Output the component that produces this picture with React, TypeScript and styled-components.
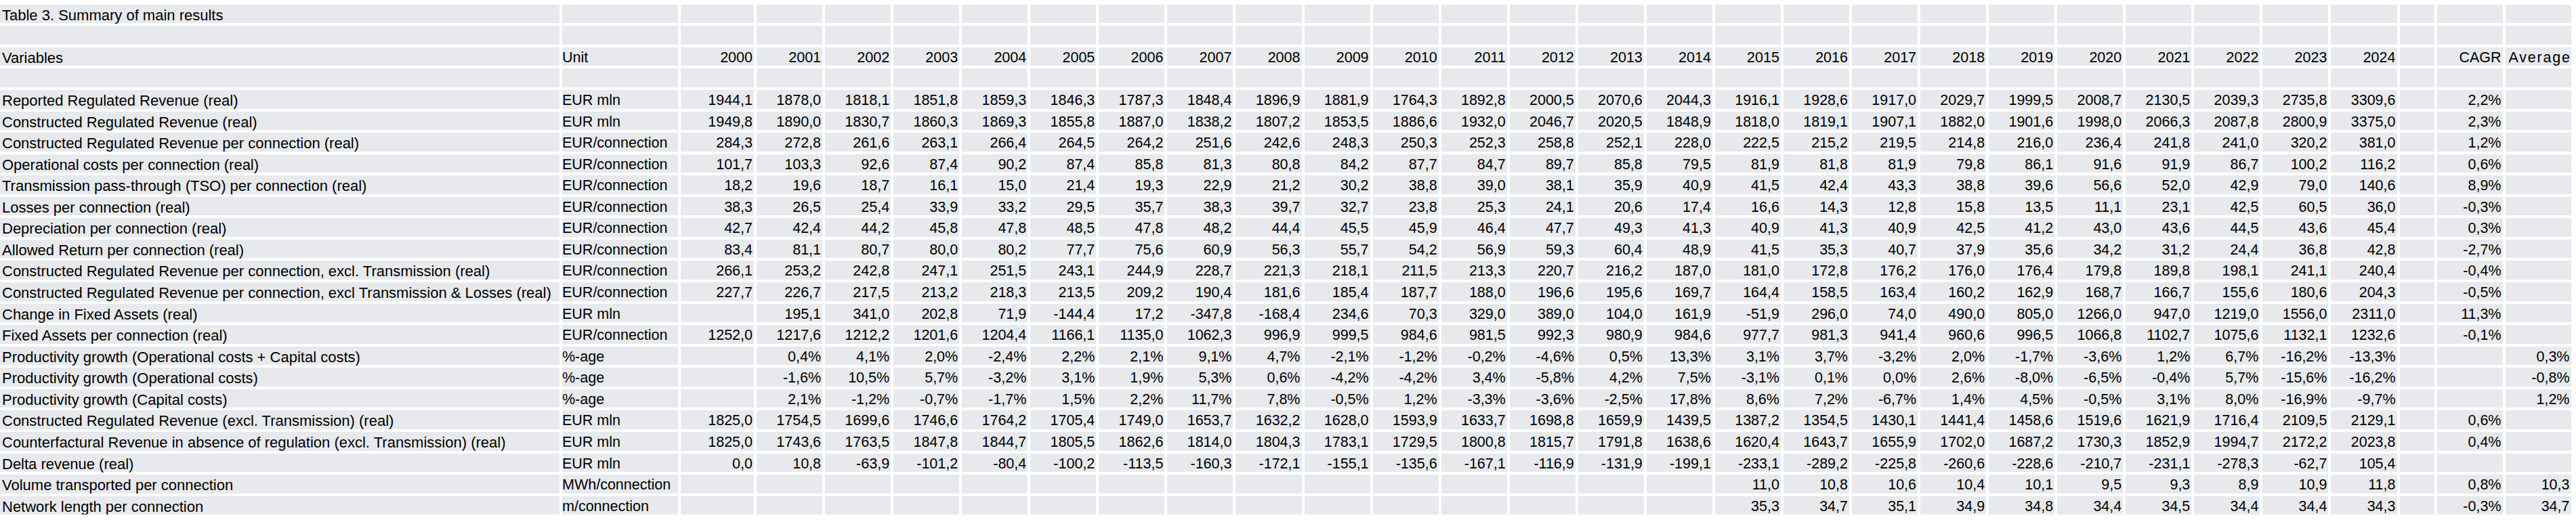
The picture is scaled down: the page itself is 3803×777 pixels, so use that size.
import React from "react";
import styled, { createGlobalStyle } from "styled-components";

const GlobalStyle = createGlobalStyle`
  html, body {
    margin: 0;
    padding: 0;
    background: #ffffff;
  }
  body {
    font-family: "Liberation Sans", Arial, sans-serif;
    color: #000000;
  }
`;

const COLUMNS = "826px 171px 108px repeat(24, 97.07px) 51px 97px 97px";

const Sheet = styled.div`
  display: flex;
  flex-direction: column;
  gap: 4px;
  padding-top: 6.7px;
  width: 3803px;
  overflow: hidden;
`;

const Row = styled.div`
  display: grid;
  grid-template-columns: ${COLUMNS};
  column-gap: 4px;
  height: 27.57px;
`;

const Cell = styled.div<{ $align?: "left" | "right" }>`
  box-sizing: border-box;
  height: 27.57px;
  background: #e7e9ec;
  padding-top: 4px;
  line-height: 23.57px;
  white-space: nowrap;
  text-align: ${(p) => p.$align ?? "left"};
`;

const LabelCell = styled(Cell)`
  font-size: 22px;
  padding-left: 3px;
`;

const UnitCell = styled(Cell)`
  font-size: 21.5px;
  padding-left: 0;
`;

const NumCell = styled(Cell)`
  font-size: 21.5px;
  padding-right: 2px;
`;

const HeadCell = styled(Cell)<{ $pad?: number; $spread?: number }>`
  font-size: 21.5px;
  padding-left: ${(p) => p.$pad ?? 0}px;
  padding-right: 2px;
  letter-spacing: ${(p) => p.$spread ?? 0}px;
  overflow: visible;
`;

const YEARS = Array.from({ length: 25 }, (_, i) => String(2000 + i));

type DataRow = {
  label: string;
  unit: string;
  values: string;
  cagr?: string;
  avg?: string;
};

const s = (str: string) => str.split(" ").map((v) => (v === "_" ? "" : v));

const DATA: DataRow[] = [
  {
    label: "Reported Regulated Revenue (real)",
    unit: "EUR mln",
    values:
      "1944,1 1878,0 1818,1 1851,8 1859,3 1846,3 1787,3 1848,4 1896,9 1881,9 1764,3 1892,8 2000,5 2070,6 2044,3 1916,1 1928,6 1917,0 2029,7 1999,5 2008,7 2130,5 2039,3 2735,8 3309,6",
    cagr: "2,2%",
  },
  {
    label: "Constructed Regulated Revenue (real)",
    unit: "EUR mln",
    values:
      "1949,8 1890,0 1830,7 1860,3 1869,3 1855,8 1887,0 1838,2 1807,2 1853,5 1886,6 1932,0 2046,7 2020,5 1848,9 1818,0 1819,1 1907,1 1882,0 1901,6 1998,0 2066,3 2087,8 2800,9 3375,0",
    cagr: "2,3%",
  },
  {
    label: "Constructed Regulated Revenue per connection (real)",
    unit: "EUR/connection",
    values:
      "284,3 272,8 261,6 263,1 266,4 264,5 264,2 251,6 242,6 248,3 250,3 252,3 258,8 252,1 228,0 222,5 215,2 219,5 214,8 216,0 236,4 241,8 241,0 320,2 381,0",
    cagr: "1,2%",
  },
  {
    label: "Operational costs per connection (real)",
    unit: "EUR/connection",
    values:
      "101,7 103,3 92,6 87,4 90,2 87,4 85,8 81,3 80,8 84,2 87,7 84,7 89,7 85,8 79,5 81,9 81,8 81,9 79,8 86,1 91,6 91,9 86,7 100,2 116,2",
    cagr: "0,6%",
  },
  {
    label: "Transmission pass-through (TSO) per connection (real)",
    unit: "EUR/connection",
    values:
      "18,2 19,6 18,7 16,1 15,0 21,4 19,3 22,9 21,2 30,2 38,8 39,0 38,1 35,9 40,9 41,5 42,4 43,3 38,8 39,6 56,6 52,0 42,9 79,0 140,6",
    cagr: "8,9%",
  },
  {
    label: "Losses per connection (real)",
    unit: "EUR/connection",
    values:
      "38,3 26,5 25,4 33,9 33,2 29,5 35,7 38,3 39,7 32,7 23,8 25,3 24,1 20,6 17,4 16,6 14,3 12,8 15,8 13,5 11,1 23,1 42,5 60,5 36,0",
    cagr: "-0,3%",
  },
  {
    label: "Depreciation per connection (real)",
    unit: "EUR/connection",
    values:
      "42,7 42,4 44,2 45,8 47,8 48,5 47,8 48,2 44,4 45,5 45,9 46,4 47,7 49,3 41,3 40,9 41,3 40,9 42,5 41,2 43,0 43,6 44,5 43,6 45,4",
    cagr: "0,3%",
  },
  {
    label: "Allowed Return per connection (real)",
    unit: "EUR/connection",
    values:
      "83,4 81,1 80,7 80,0 80,2 77,7 75,6 60,9 56,3 55,7 54,2 56,9 59,3 60,4 48,9 41,5 35,3 40,7 37,9 35,6 34,2 31,2 24,4 36,8 42,8",
    cagr: "-2,7%",
  },
  {
    label: "Constructed Regulated Revenue per connection, excl. Transmission (real)",
    unit: "EUR/connection",
    values:
      "266,1 253,2 242,8 247,1 251,5 243,1 244,9 228,7 221,3 218,1 211,5 213,3 220,7 216,2 187,0 181,0 172,8 176,2 176,0 176,4 179,8 189,8 198,1 241,1 240,4",
    cagr: "-0,4%",
  },
  {
    label: "Constructed Regulated Revenue per connection, excl Transmission & Losses (real)",
    unit: "EUR/connection",
    values:
      "227,7 226,7 217,5 213,2 218,3 213,5 209,2 190,4 181,6 185,4 187,7 188,0 196,6 195,6 169,7 164,4 158,5 163,4 160,2 162,9 168,7 166,7 155,6 180,6 204,3",
    cagr: "-0,5%",
  },
  {
    label: "Change in Fixed Assets (real)",
    unit: "EUR mln",
    values:
      "_ 195,1 341,0 202,8 71,9 -144,4 17,2 -347,8 -168,4 234,6 70,3 329,0 389,0 104,0 161,9 -51,9 296,0 74,0 490,0 805,0 1266,0 947,0 1219,0 1556,0 2311,0",
    cagr: "11,3%",
  },
  {
    label: "Fixed Assets per connection (real)",
    unit: "EUR/connection",
    values:
      "1252,0 1217,6 1212,2 1201,6 1204,4 1166,1 1135,0 1062,3 996,9 999,5 984,6 981,5 992,3 980,9 984,6 977,7 981,3 941,4 960,6 996,5 1066,8 1102,7 1075,6 1132,1 1232,6",
    cagr: "-0,1%",
  },
  {
    label: "Productivity growth (Operational costs + Capital costs)",
    unit: "%-age",
    values:
      "_ 0,4% 4,1% 2,0% -2,4% 2,2% 2,1% 9,1% 4,7% -2,1% -1,2% -0,2% -4,6% 0,5% 13,3% 3,1% 3,7% -3,2% 2,0% -1,7% -3,6% 1,2% 6,7% -16,2% -13,3%",
    avg: "0,3%",
  },
  {
    label: "Productivity growth (Operational costs)",
    unit: "%-age",
    values:
      "_ -1,6% 10,5% 5,7% -3,2% 3,1% 1,9% 5,3% 0,6% -4,2% -4,2% 3,4% -5,8% 4,2% 7,5% -3,1% 0,1% 0,0% 2,6% -8,0% -6,5% -0,4% 5,7% -15,6% -16,2%",
    avg: "-0,8%",
  },
  {
    label: "Productivity growth (Capital costs)",
    unit: "%-age",
    values:
      "_ 2,1% -1,2% -0,7% -1,7% 1,5% 2,2% 11,7% 7,8% -0,5% 1,2% -3,3% -3,6% -2,5% 17,8% 8,6% 7,2% -6,7% 1,4% 4,5% -0,5% 3,1% 8,0% -16,9% -9,7%",
    avg: "1,2%",
  },
  {
    label: "Constructed Regulated Revenue (excl. Transmission) (real)",
    unit: "EUR mln",
    values:
      "1825,0 1754,5 1699,6 1746,6 1764,2 1705,4 1749,0 1653,7 1632,2 1628,0 1593,9 1633,7 1698,8 1659,9 1439,5 1387,2 1354,5 1430,1 1441,4 1458,6 1519,6 1621,9 1716,4 2109,5 2129,1",
    cagr: "0,6%",
  },
  {
    label: "Counterfactural Revenue in absence of regulation (excl. Transmission) (real)",
    unit: "EUR mln",
    values:
      "1825,0 1743,6 1763,5 1847,8 1844,7 1805,5 1862,6 1814,0 1804,3 1783,1 1729,5 1800,8 1815,7 1791,8 1638,6 1620,4 1643,7 1655,9 1702,0 1687,2 1730,3 1852,9 1994,7 2172,2 2023,8",
    cagr: "0,4%",
  },
  {
    label: "Delta revenue (real)",
    unit: "EUR mln",
    values:
      "0,0 10,8 -63,9 -101,2 -80,4 -100,2 -113,5 -160,3 -172,1 -155,1 -135,6 -167,1 -116,9 -131,9 -199,1 -233,1 -289,2 -225,8 -260,6 -228,6 -210,7 -231,1 -278,3 -62,7 105,4",
  },
  {
    label: "Volume transported per connection",
    unit: "MWh/connection",
    values:
      "_ _ _ _ _ _ _ _ _ _ _ _ _ _ _ 11,0 10,8 10,6 10,4 10,1 9,5 9,3 8,9 10,9 11,8",
    cagr: "0,8%",
    avg: "10,3",
  },
  {
    label: "Network length per connection",
    unit: "m/connection",
    values:
      "_ _ _ _ _ _ _ _ _ _ _ _ _ _ _ 35,3 34,7 35,1 34,9 34,8 34,4 34,5 34,4 34,4 34,3",
    cagr: "-0,3%",
    avg: "34,7",
  },
];

const EMPTY_YEARS = YEARS.map(() => "");

function BlankRow({ label }: { label?: string }) {
  return (
    <Row>
      <LabelCell>{label ?? ""}</LabelCell>
      <UnitCell />
      {EMPTY_YEARS.map((_, i) => (
        <NumCell key={i} />
      ))}
      <NumCell />
      <NumCell />
      <NumCell />
    </Row>
  );
}

function HeaderRow() {
  return (
    <Row>
      <LabelCell>Variables</LabelCell>
      <UnitCell>Unit</UnitCell>
      {YEARS.map((y) => (
        <HeadCell key={y} $align="right">
          {y}
        </HeadCell>
      ))}
      <HeadCell />
      <HeadCell $align="right">CAGR</HeadCell>
      <HeadCell $align="left" $pad={5} $spread={1.8}>
        Average
      </HeadCell>
    </Row>
  );
}

function DataLine({ row }: { row: DataRow }) {
  const vals = s(row.values);
  return (
    <Row>
      <LabelCell>{row.label}</LabelCell>
      <UnitCell>{row.unit}</UnitCell>
      {vals.map((v, i) => (
        <NumCell key={i} $align="right">
          {v}
        </NumCell>
      ))}
      <NumCell />
      <NumCell $align="right">{row.cagr ?? ""}</NumCell>
      <NumCell $align="right">{row.avg ?? ""}</NumCell>
    </Row>
  );
}

export default function App() {
  return (
    <>
      <GlobalStyle />
      <Sheet>
        <BlankRow label="Table 3. Summary of main results" />
        <BlankRow />
        <HeaderRow />
        <BlankRow />
        {DATA.map((row) => (
          <DataLine key={row.label} row={row} />
        ))}
      </Sheet>
    </>
  );
}
